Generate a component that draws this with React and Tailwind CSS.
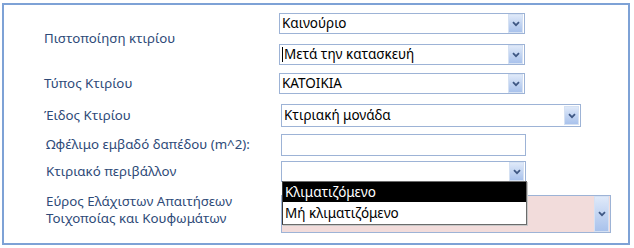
import React from "react";

function Arrow({ tall }) {
  return (
    <div
      className={
        "flex items-center justify-center w-[15px] border border-[#d5e1f3] bg-gradient-to-b from-[#dfe9f9] via-[#c3d5f2] to-[#a9c2ec] " +
        (tall ? "h-[36px]" : "h-[19px]")
      }
    >
      <svg width="8" height="6" viewBox="0 0 8 6">
        <path d="M1 1.2 L4 4.2 L7 1.2" fill="none" stroke="#3f5884" strokeWidth="1.8" />
      </svg>
    </div>
  );
}

function Combo({ text, w, h, caret, pink }) {
  return (
    <div
      className={
        "flex items-center justify-between border border-[#9db3d6] pl-[2px] pr-px " +
        (pink ? "bg-[#f2dcdb] " : "bg-white ") +
        w +
        " " +
        h
      }
    >
      <div className="flex items-center text-[13.5px] leading-none text-black">
        {caret && <span className="w-px h-[15px] bg-black mr-px" />}
        {text}
      </div>
      <Arrow tall={pink} />
    </div>
  );
}

export default function App() {
  const font = { fontFamily: '"Noto Sans", "Open Sans", sans-serif' };
  return (
    <div className="w-[634px] h-[248px] bg-white pt-[3px] pl-[2px]" style={font}>
      <div className="relative w-[628px] h-[242px] border-2 border-[#7ea2d6] pt-[8px] pl-[40px] text-[13.3px] text-[#2e4a78]">
        {/* Row 1-2 */}
        <div className="flex">
          <div className="w-[235px] flex items-center">Πιστοποίηση κτιρίου</div>
          <div className="flex flex-col gap-[10px]">
            <Combo text="Καινούριο" w="w-[246px]" h="h-[21px]" />
            <Combo text="Μετά την κατασκευή" w="w-[246px]" h="h-[21px]" caret />
          </div>
        </div>
        {/* Row 3 */}
        <div className="flex mt-[8px]">
          <div className="w-[235px] flex items-center">Τύπος Κτιρίου</div>
          <Combo text="ΚΑΤΟΙΚΙΑ" w="w-[246px]" h="h-[21px]" />
        </div>
        {/* Row 4 */}
        <div className="flex mt-[10px]">
          <div className="w-[237px] flex items-center">Έιδος Κτιρίου</div>
          <Combo text="Κτιριακή μονάδα" w="w-[300px]" h="h-[23px]" />
        </div>
        {/* Row 5 */}
        <div className="flex mt-[7px] pl-[2px]">
          <div className="w-[235px] flex items-center">Ωφέλιμο εμβαδό δαπέδου (m^2):</div>
          <div className="w-[245px] h-[22px] border border-[#9db3d6] bg-white" />
        </div>
        {/* Row 6 */}
        <div className="flex mt-[5px] pl-[2px]">
          <div className="w-[235px] flex items-center">Κτιριακό περιβάλλον</div>
          <Combo text="" w="w-[245px]" h="h-[21px]" />
        </div>
        {/* Row 7 */}
        <div className="flex mt-[13px] pl-[2px]">
          <div className="w-[235px] flex flex-col leading-[17px] -mt-[2px]">
            <span>Εύρος Ελάχιστων Απαιτήσεων</span>
            <span>Τοιχοποίας και Κουφωμάτων</span>
          </div>
          <Combo text="" w="w-[330px]" h="h-[38px]" pink />
        </div>
        {/* Dropdown list */}
        <div className="absolute left-[278px] top-[176px] w-[245px] border border-[#6b6b6b] border-l-[#3a3a3a] bg-white text-[13.5px] text-black shadow-[1px_1px_0_#c8c8c8]">
          <div className="h-[20px] bg-black text-white flex items-center pl-[2px]">Κλιματιζόμενο</div>
          <div className="h-[22px] flex items-center pl-[2px]">Μή κλιματιζόμενο</div>
        </div>
      </div>
    </div>
  );
}
